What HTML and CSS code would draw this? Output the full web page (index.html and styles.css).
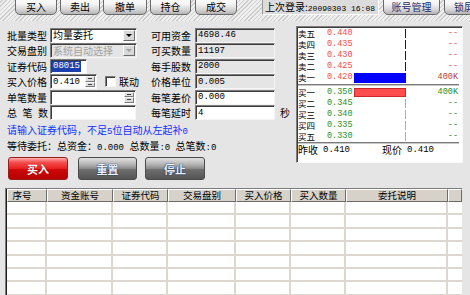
FILE: index.html
```html
<!DOCTYPE html>
<html lang="zh-CN">
<head>
<meta charset="utf-8">
<title>批量下单</title>
<link rel="stylesheet" href="styles.css">
</head>
<body>
<div class="toolbar">
  <div class="tab t1">买入</div>
  <div class="tab t2">卖出</div>
  <div class="tab t3">撤单</div>
  <div class="tab t4">持仓</div>
  <div class="tab t5">成交</div>
  <div class="login">上次登录:<span class="n8">20090303 16:08</span></div>
  <div class="tab acct">账号管理</div>
  <div class="tab lock">锁屏</div>
</div>

<div class="main">
  <div class="left">
    <div class="fields">
      <span class="lbl">批量类型</span>
      <div class="field sel w87"><span class="seltxt">均量委托</span><b class="dd"></b></div>
      <span class="lbl mid">可用资金</span>
      <div class="field ro n">4698.46</div>
      <span></span>

      <span class="lbl">交易盘别</span>
      <div class="field sel dis w87"><span class="seltxt">系统自动选择</span><b class="dd"></b></div>
      <span class="lbl mid">可买数量</span>
      <div class="field ro n">11197</div>
      <span></span>

      <span class="lbl">证券代码</span>
      <div class="field w37"><span class="hl n">08015</span></div>
      <span class="lbl mid">每手股数</span>
      <div class="field ro n">2000</div>
      <span></span>

      <span class="lbl">买入价格</span>
      <div class="pricerow">
        <div class="field w47 n">0.410<b class="spin"><i class="up"></i><i class="down"></i></b></div>
        <i class="chk"></i><span class="chklbl">联动</span>
      </div>
      <span class="lbl mid">价格单位</span>
      <div class="field ro n">0.005</div>
      <span></span>

      <span class="lbl">单笔数量</span>
      <div class="field w86"><b class="spin"><i class="up"></i><i class="down"></i></b></div>
      <span class="lbl mid">每笔差价</span>
      <div class="field n">0.000</div>
      <span></span>

      <span class="lbl just">总 笔 数</span>
      <div class="field w86"></div>
      <span class="lbl mid">每笔延时</span>
      <div class="field n">4</div>
      <span class="sec">秒</span>
    </div>

    <div class="hint">请输入证券代码，不足<span class="n">5</span>位自动从左起补<span class="n">0</span></div>
    <div class="status">等待委托：总资金：<span class="n">0.000 </span>总数量<span class="n">:0 </span>总笔数<span class="n">:0</span></div>

    <div class="actions">
      <div class="btn red">买入</div>
      <div class="btn gray b2">重置</div>
      <div class="btn gray b3">停止</div>
    </div>
  </div>

  <div class="book">
    <div class="brow sell"><span class="bl">卖五</span><span class="bp n">0.440</span><span class="bbar"><i style="width:1px"></i></span><span class="bv n">--</span></div>
    <div class="brow sell"><span class="bl">卖四</span><span class="bp n">0.435</span><span class="bbar"><i style="width:1px"></i></span><span class="bv n">--</span></div>
    <div class="brow sell"><span class="bl">卖三</span><span class="bp n">0.430</span><span class="bbar"><i style="width:1px"></i></span><span class="bv n">--</span></div>
    <div class="brow sell"><span class="bl">卖二</span><span class="bp n">0.425</span><span class="bbar"><i style="width:1px"></i></span><span class="bv n">--</span></div>
    <div class="brow sell"><span class="bl">卖一</span><span class="bp n">0.420</span><span class="bbar"><i class="full" style="width:52px"></i></span><span class="bv n big">400K</span></div>
    <div class="bsep"></div>
    <div class="brow buy"><span class="bl">买一</span><span class="bp n">0.350</span><span class="bbar"><i class="full" style="width:52px"></i></span><span class="bv n">400K</span></div>
    <div class="brow buy"><span class="bl">买二</span><span class="bp n">0.345</span><span class="bbar"><i style="width:1px"></i></span><span class="bv n">--</span></div>
    <div class="brow buy"><span class="bl">买三</span><span class="bp n">0.340</span><span class="bbar"><i style="width:1px"></i></span><span class="bv n">--</span></div>
    <div class="brow buy"><span class="bl">买四</span><span class="bp n">0.335</span><span class="bbar"><i style="width:1px"></i></span><span class="bv n">--</span></div>
    <div class="brow buy"><span class="bl">买五</span><span class="bp n">0.330</span><span class="bbar"><i style="width:1px"></i></span><span class="bv n">--</span></div>
    <div class="bsep last"></div>
    <div class="bfoot"><span>昨收</span><span class="n">0.410</span><span>现价</span><span class="n">0.410</span></div>
  </div>
</div>

<div class="tbl">
  <div class="thead">
    <div class="first">序号</div><div>资金账号</div><div>证券代码</div><div>交易盘别</div><div>买入价格</div><div>买入数量</div><div>委托说明</div><div></div>
  </div>
  <div class="tr"><div></div><div></div><div></div><div></div><div></div><div></div><div></div><div></div></div>
  <div class="tr"><div></div><div></div><div></div><div></div><div></div><div></div><div></div><div></div></div>
  <div class="tr"><div></div><div></div><div></div><div></div><div></div><div></div><div></div><div></div></div>
  <div class="tr"><div></div><div></div><div></div><div></div><div></div><div></div><div></div><div></div></div>
  <div class="tr"><div></div><div></div><div></div><div></div><div></div><div></div><div></div><div></div></div>
  <div class="tr"><div></div><div></div><div></div><div></div><div></div><div></div><div></div><div></div></div>
  <div class="tr"><div></div><div></div><div></div><div></div><div></div><div></div><div></div><div></div></div>
</div>
<div class="bottomline"></div>
</body>
</html>
```

FILE: styles.css
```css
* { box-sizing: border-box; margin: 0; padding: 0; }
html, body { width: 470px; height: 295px; overflow: hidden; }
body {
  background: #e5e5e5;
  color: #000;
  font: 10px/12px "Noto Sans CJK SC", "Liberation Sans", sans-serif;
}
.n { font-family: "Liberation Mono", "Noto Sans CJK SC", monospace; font-size: 9px; }
.n8 { font-family: "Liberation Mono", monospace; font-size: 8px; }

/* ---------- toolbar ---------- */
.toolbar {
  height: 21px;
  display: flex;
  align-items: flex-start;
  padding-left: 15px;
  background: repeating-linear-gradient(-45deg, #cdcdcd 0 1px, #efefef 1px 3px);
  white-space: nowrap;
  overflow: hidden;
}
.tab {
  flex: none;
  height: 20px;
  margin-top: -5px;
  padding-top: 4px;
  border: 1px solid #6a6a6a;
  border-radius: 5px;
  background: linear-gradient(#ffffff, #f4f4f4 45%, #d6d6d6 75%, #b4b4b4);
  display: flex;
  align-items: center;
  justify-content: center;
  line-height: 12px;
}
.t1 { width: 42px; }
.t2 { width: 40px; margin-left: 3px; }
.t3 { width: 44px; margin-left: 3px; }
.t4 { width: 41px; margin-left: 3px; }
.t5 { width: 42px; margin-left: 4px; }
.login {
  flex: none;
  width: 117px;
  height: 15px;
  margin-left: 25px;
  padding-left: 2px;
  background: #dcdcdc;
  border-left: 1px solid #9a9a9a;
  border-bottom: 1px solid #ffffff;
  border-right: 1px solid #ffffff;
  line-height: 14px;
}
.acct { width: 57px; margin-left: 4px; color: #1c2f6e; }
.lock { width: 40px; margin-left: 4px; color: #1c2f6e; justify-content: flex-start; padding-left: 9px; }

/* ---------- main ---------- */
.main {
  display: flex;
  padding: 5px 0 0 7px;
}
.left { width: 289px; flex: none; }

.fields {
  margin-top: 1.5px;
  display: grid;
  grid-template-columns: 43px 100px 45px 80px 16px;
  grid-auto-rows: 15px;
  row-gap: 0.5px;
  align-items: center;
}
.lbl { line-height: 15px; white-space: nowrap; }
.lbl.mid { padding-left: 1px; }
.lbl.just { width: 41px; text-align: justify; text-align-last: justify; }
.sec { padding-left: 5px; line-height: 15px; }

.field {
  position: relative;
  height: 15px;
  background: #fff;
  border: 1px solid;
  border-color: #7c7c7c #f6f6f6 #f6f6f6 #7c7c7c;
  box-shadow: inset 1px 1px 0 #3c3c3c;
  padding-left: 2px;
  display: flex;
  align-items: center;
  white-space: nowrap;
  line-height: 12px;
}
.field.ro { background: #e5e5e5; }
.w87 { width: 87px; }
.w86 { width: 86px; }
.w47 { width: 47px; }
.w37 { width: 37px; }

.seltxt { font-size: 10px; }
.sel.dis { background: #e5e5e5; }
.sel.dis .seltxt { color: #a2a2a2; }
.dd {
  position: absolute;
  right: 1px;
  top: 1px;
  width: 12px;
  height: 11px;
  background: #d8d8d8;
  border: 1px solid;
  border-color: #fafafa #6a6a6a #6a6a6a #fafafa;
}
.dd::after {
  content: "";
  position: absolute;
  left: 2px;
  top: 3px;
  border-left: 3.5px solid transparent;
  border-right: 3.5px solid transparent;
  border-top: 3.5px solid #000;
}
.dis .dd::after { border-top-color: #a0a0a0; }

.hl {
  background: #1d3fae;
  color: #fff;
  line-height: 11px;
  padding: 0 1px;
  margin-left: -1px;
}

.spin {
  position: absolute;
  right: 1px;
  top: 1px;
  width: 10px;
  height: 11px;
  display: flex;
  flex-direction: column;
}
.spin i {
  flex: 1;
  position: relative;
  background: #dcdcdc;
  border: 1px solid;
  border-color: #fafafa #7a7a7a #7a7a7a #fafafa;
}
.spin i::after {
  content: "";
  position: absolute;
  left: 2px;
  top: 1px;
  width: 4px;
  height: 1px;
  background: #404040;
}

.pricerow { display: flex; align-items: center; }
.chk {
  width: 11px;
  height: 11px;
  margin-left: 8px;
  background: #fff;
  border: 1px solid;
  border-color: #7c7c7c #f6f6f6 #f6f6f6 #7c7c7c;
  box-shadow: inset 1px 1px 0 #3c3c3c;
}
.chklbl { margin-left: 3px; line-height: 15px; }

.hint {
  margin-top: 4px;
  color: #1030ff;
  line-height: 12px;
  white-space: nowrap;
}
.status {
  margin-top: 2px;
  line-height: 12px;
  white-space: nowrap;
}

.actions {
  display: flex;
  margin-top: 3px;
  padding-left: 1px;
}
.btn {
  width: 60px;
  height: 23px;
  border-radius: 3px;
  display: flex;
  align-items: center;
  justify-content: center;
  font-size: 11px;
  font-weight: bold;
  color: #fff;
}
.btn.red {
  background: linear-gradient(#ffb0b0, #f55050 20%, #e82020 50%, #cc0808 55%, #b80000);
  border: 1px solid #9a1c1c;
  text-shadow: 0 0 1px #7a0000;
}
.btn.gray {
  background: linear-gradient(#e2e2e2, #b4b4b4 30%, #8c8c8c 50%, #6e6e6e 55%, #545454);
  border: 1px solid #4a4a4a;
  color: #eef3ff;
  text-shadow: 0 0 1px #06205a, 0 0 1px #06205a;
}
.b2 { width: 59px; margin-left: 10px; }
.b3 { margin-left: 8px; }

/* ---------- order book ---------- */
.book {
  flex: none;
  width: 167px;
  height: 137px;
  background: #fff;
  border: 1px solid;
  border-color: #7c7c7c #fafafa #fafafa #7c7c7c;
  box-shadow: inset 1px 1px 0 #3c3c3c;
  padding: 1px 3px 0 1px;
}
.brow {
  display: grid;
  grid-template-columns: 29px 27px 52px 52px;
  height: 11px;
  line-height: 11px;
  white-space: nowrap;
  overflow: hidden;
}
.bl { font-size: 8.5px; line-height: 11px; }
.bp { font-size: 8.5px; }
.bv { text-align: right; font-size: 8.5px; }
.sell .bp, .sell .bv { color: #ff4848; }
.sell .bv.big { color: #b83a3a; }
.buy .bp, .buy .bv { color: #1f8f1f; }
.bbar { display: flex; justify-content: flex-end; padding-top: 1px; }
.bbar i { display: block; height: 9px; }
.sell .bbar i { background: #0000ff; }
.sell .bbar i.full { height: 10px; }
.buy .bbar i { background: #ff8a8a; }
.buy .bbar i.full { background: #ff4c4c; border: 1px solid #c62a2a; height: 9px; }
.bsep {
  height: 2px;
  margin: 1px 0;
  border-top: 1px solid #7a7a7a;
  border-bottom: 1px solid #c8c8c8;
}
.bsep.last { margin: 0; }
.bfoot {
  display: grid;
  grid-template-columns: 25px 59px 25px auto;
  line-height: 12px;
  white-space: nowrap;
}

/* ---------- table ---------- */
.tbl {
  margin: 8px 0 0 5px;
  width: 457px;
  height: 107px;
  overflow: hidden;
  background: #fff;
  border-left: 1px solid #7c7c7c;
  border-top: 1px solid #7c7c7c;
  box-shadow: inset 1px 1px 0 #1e1e1e;
  padding-left: 1px;
}
.thead, .tr {
  display: grid;
  grid-template-columns: 40px 66px 55px 68px 55px 55px 102px 14px;
}
.thead { height: 13px; }
.thead div {
  background: #d6d2ca;
  border-top: 1px solid #fff;
  border-left: 1px solid #fff;
  border-right: 1px solid #6c6c6c;
  border-bottom: 1px solid #6c6c6c;
  text-align: center;
  font-size: 9.5px;
  line-height: 11px;
  white-space: nowrap;
}
.thead .first { padding-right: 10px; }
.tr { height: 13.4px; }
.tr div {
  border-right: 2px solid #dcd8d0;
  border-bottom: 2px solid #dcd8d0;
}
.tr div:last-child { border-right: 0; }
.bottomline { height: 2px; background: #3a3a3a; }
```
